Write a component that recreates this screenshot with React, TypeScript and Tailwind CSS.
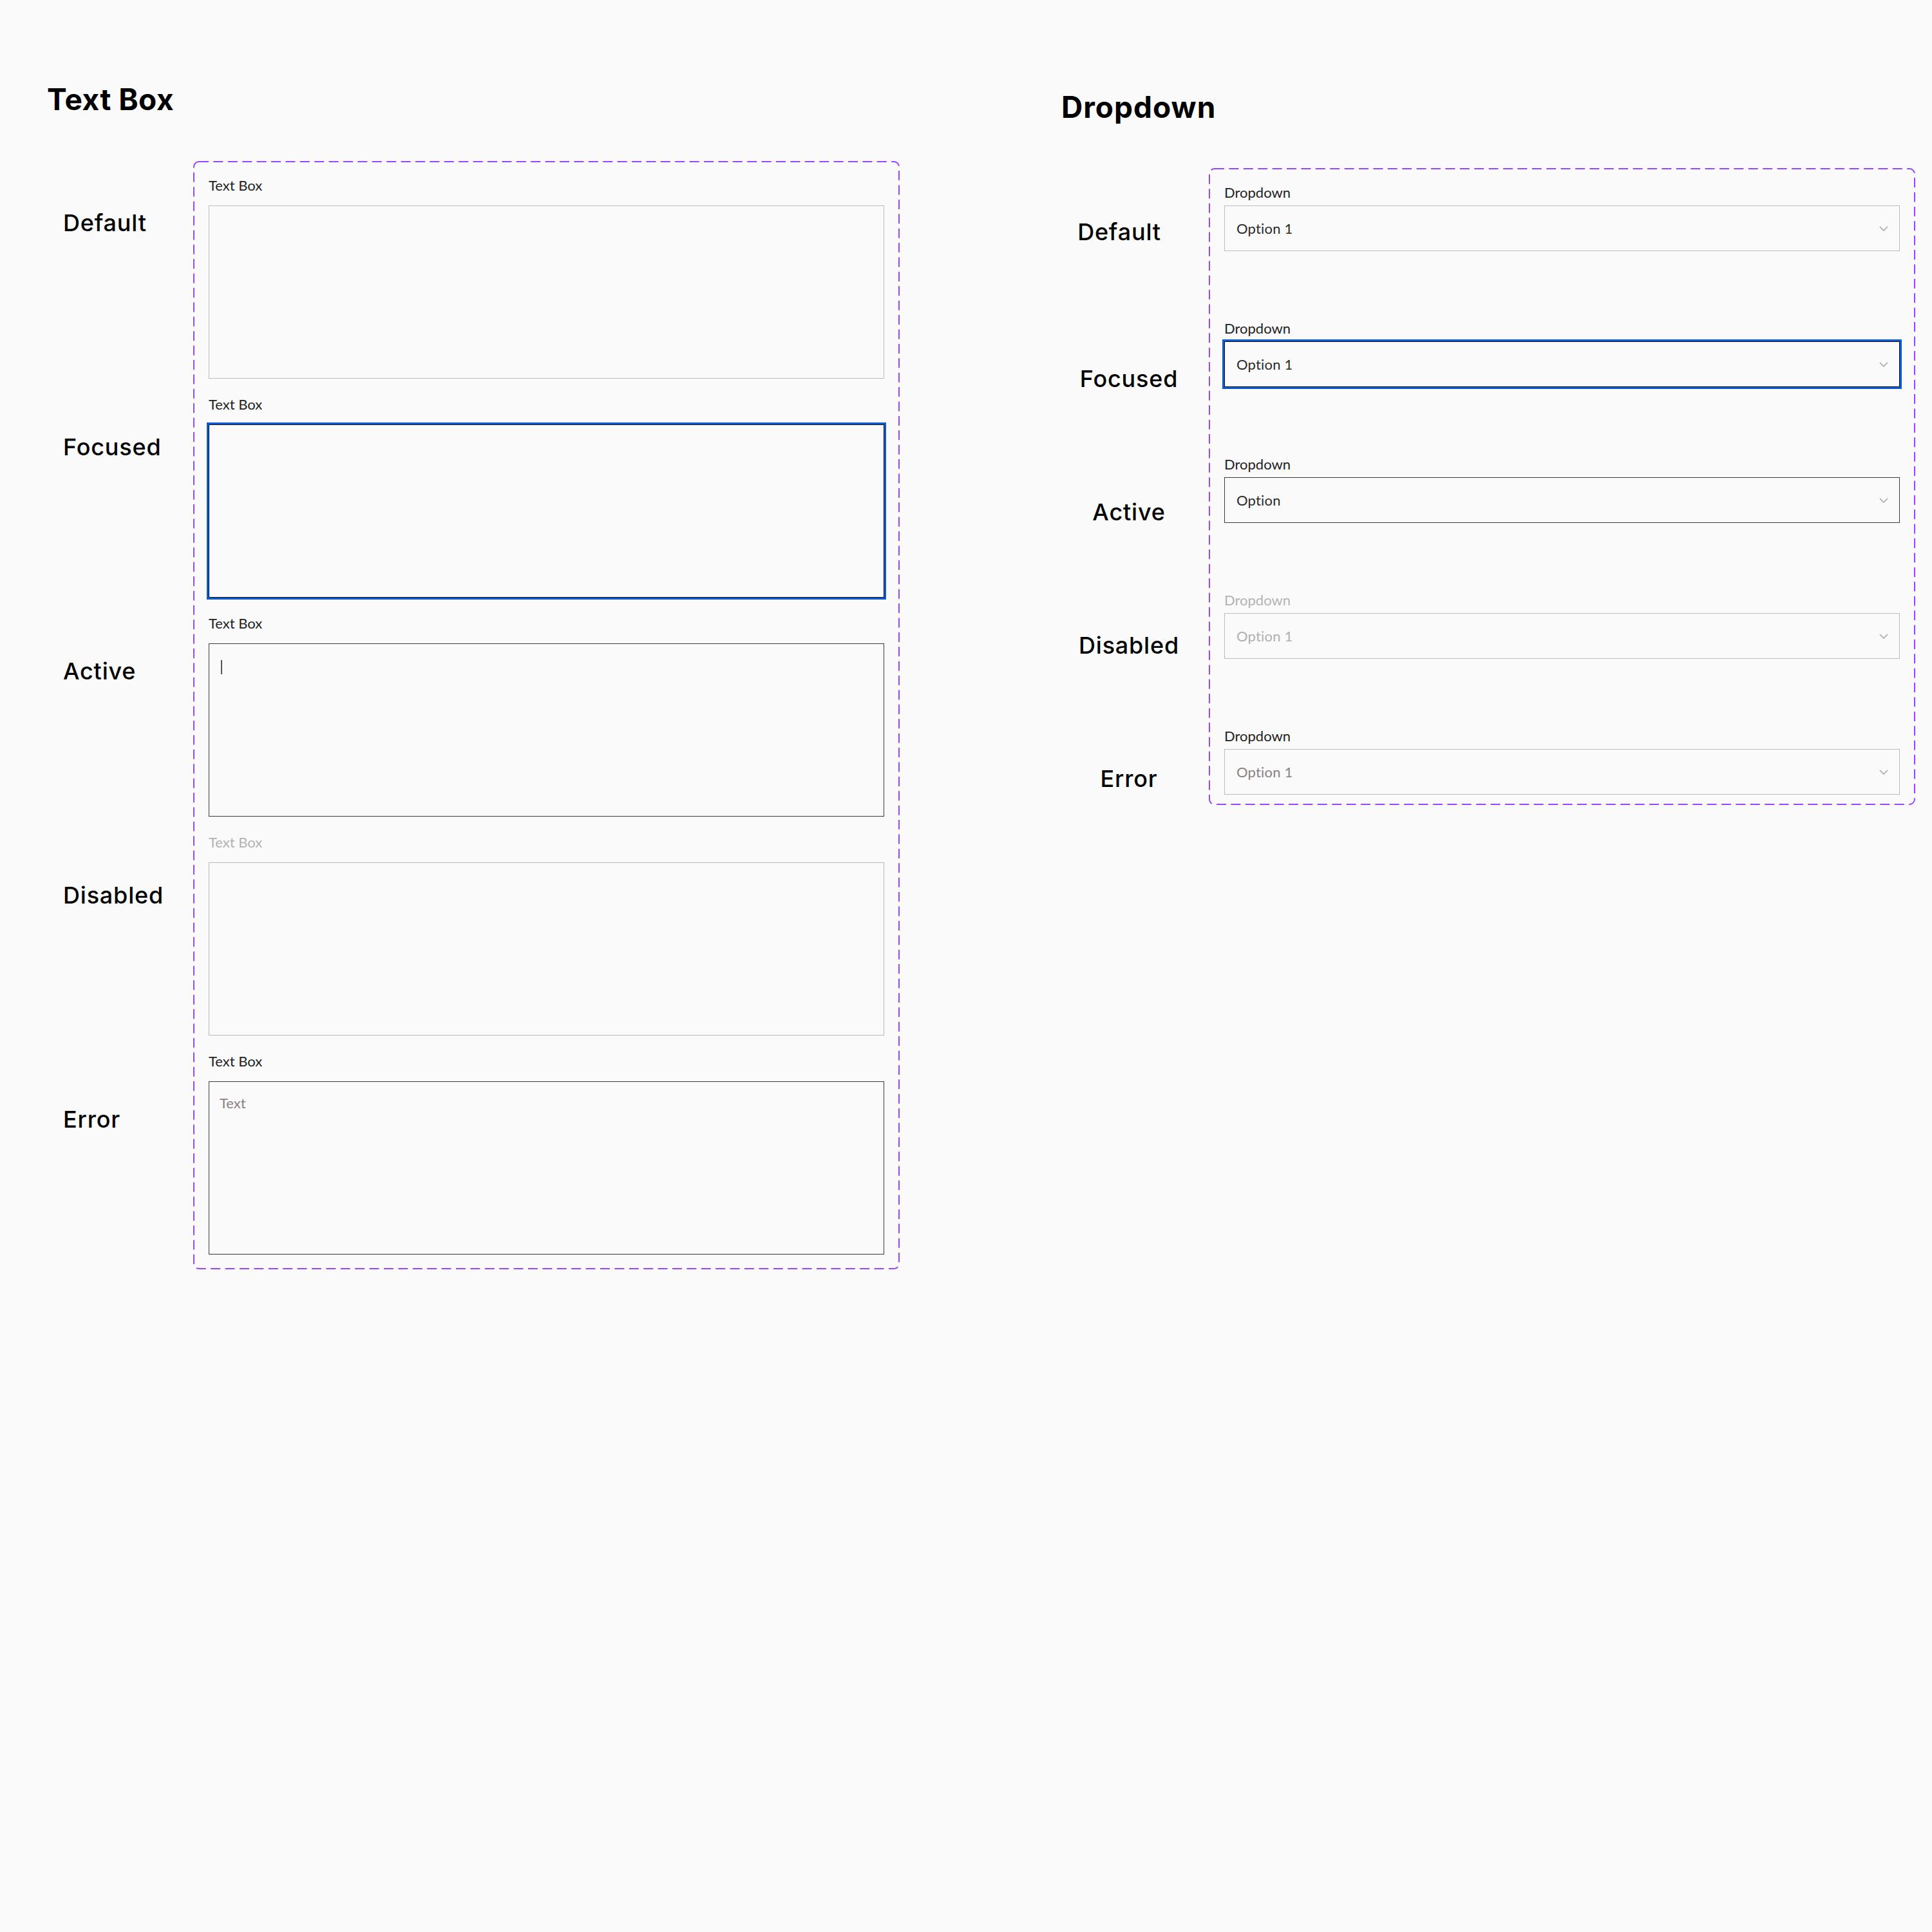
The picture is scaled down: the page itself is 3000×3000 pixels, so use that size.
import React from "react";

const labelFont = { fontFamily: "Lato, 'Open Sans', sans-serif" } as const;

function DashedFrame() {
  return (
    <svg className="pointer-events-none absolute inset-0 h-full w-full overflow-visible" aria-hidden>
      <rect
        x="1"
        y="1"
        rx="8"
        ry="8"
        className="h-[calc(100%-2px)] w-[calc(100%-2px)]"
        fill="none"
        stroke="#9747ff"
        strokeWidth="2"
        strokeDasharray="15 7.4"
      />
    </svg>
  );
}

function Chevron() {
  return (
    <svg width="14" height="8" viewBox="0 0 14 8" className="shrink-0">
      <path d="M1 1 L7 7 L13 1" fill="none" stroke="#a3a3a3" strokeWidth="1.5" />
    </svg>
  );
}

type FieldState = "default" | "focused" | "active" | "disabled" | "error";

function TextBoxField({ state }: { state: FieldState }) {
  const labelColor = state === "disabled" ? "text-[#b3b3b3]" : "text-[#222222]";
  let box = "border-[1.5px] border-[#bdbdbd]";
  if (state === "focused") box = "border-[1.5px] border-[#111111] shadow-[0_0_0_3px_#0b5cd6]";
  if (state === "active") box = "border-[1.5px] border-[#3a3a3a]";
  if (state === "disabled") box = "border-[1.5px] border-[#b8b8b8]";
  if (state === "error") box = "border-[1.5px] border-[#3a3a3a]";
  return (
    <div className="flex flex-col">
      <div className={`h-[26px] text-[22px] leading-[26px] ${labelColor}`} style={labelFont}>
        Text Box
      </div>
      <div className={`mt-[18px] h-[269px] w-full bg-[#fafafa] pl-[16px] pt-[20px] ${box}`}>
        {state === "active" && <div className="ml-[2px] mt-[5px] h-[22px] w-[1.5px] bg-[#555555]" />}
        {state === "error" && (
          <div className="text-[22px] leading-[26px] text-[#8a8282]" style={labelFont}>
            Text
          </div>
        )}
      </div>
    </div>
  );
}

function DropdownField({ state, value }: { state: FieldState; value: string }) {
  const labelColor = state === "disabled" ? "text-[#b3b3b3]" : "text-[#222222]";
  let box = "border-[1.5px] border-[#bdbdbd]";
  if (state === "focused") box = "border-[1.5px] border-[#111111] shadow-[0_0_0_3px_#0b5cd6]";
  if (state === "active") box = "border-[1.5px] border-[#3a3a3a]";
  if (state === "disabled") box = "border-[1.5px] border-[#bcbcbc]";
  let valueColor = "text-[#2b2b2b]";
  if (state === "disabled") valueColor = "text-[#b0b0b0]";
  if (state === "error") valueColor = "text-[#8a8282]";
  return (
    <div className="flex flex-col">
      <div className={`h-[26px] text-[22px] leading-[26px] ${labelColor}`} style={labelFont}>
        Dropdown
      </div>
      <div className={`mt-[7px] flex h-[71px] w-full items-center justify-between bg-[#fafafa] pl-[18px] pr-[17px] ${box}`}>
        <span className={`text-[22px] leading-[26px] tracking-[0.2px] ${valueColor}`} style={labelFont}>
          {value}
        </span>
        <Chevron />
      </div>
    </div>
  );
}

const titleFont = { fontFamily: "Inter, 'Liberation Sans', sans-serif" } as const;

export default function App() {
  return (
    <div className="flex h-[3000px] w-[3000px] items-start gap-[251px] bg-[#fafafa] pl-[73px] pt-[126px]">
      {/* Text Box column */}
      <section className="flex flex-col">
        <h2 className="h-[56px] text-[46px] font-bold leading-[56px] tracking-[0.5px] text-black" style={titleFont}>
          Text Box
        </h2>
        <div className="mt-[68px] flex">
          <div className="flex w-[227px] flex-col gap-[304px] pl-[25px] pt-[74px]">
            {["Default", "Focused", "Active", "Disabled", "Error"].map((t) => (
              <div key={t} className="h-[44px] text-[36px] font-medium leading-[44px] tracking-[0.8px] text-black" style={titleFont}>
                {t}
              </div>
            ))}
          </div>
          <div className="relative flex w-[1097px] flex-col gap-[27px] px-[24px] pb-[23px] pt-[25px]">
            <DashedFrame />
            <TextBoxField state="default" />
            <TextBoxField state="focused" />
            <TextBoxField state="active" />
            <TextBoxField state="disabled" />
            <TextBoxField state="error" />
          </div>
        </div>
      </section>

      {/* Dropdown column */}
      <section className="mt-[12px] flex flex-col">
        <h2 className="h-[56px] text-[46px] font-bold leading-[56px] tracking-[1px] text-black" style={titleFont}>
          Dropdown
        </h2>
        <div className="mt-[67px] flex">
          <div className="flex w-[210px] flex-col items-center gap-[163px] pt-[77px]">
            <div className="mr-[30px] h-[44px] text-[36px] font-medium leading-[44px] tracking-[0.8px] text-black" style={titleFont}>
              Default
            </div>
            <div className="mt-[21px] h-[44px] text-[36px] font-medium leading-[44px] tracking-[0.8px] text-black" style={titleFont}>
              Focused
            </div>
            <div className="h-[44px] text-[36px] font-medium leading-[44px] tracking-[0.8px] text-black" style={titleFont}>
              Active
            </div>
            <div className="h-[44px] text-[36px] font-medium leading-[44px] tracking-[0.8px] text-black" style={titleFont}>
              Disabled
            </div>
            <div className="h-[44px] text-[36px] font-medium leading-[44px] tracking-[0.8px] text-black" style={titleFont}>
              Error
            </div>
          </div>
          <div className="relative ml-[19px] flex w-[1097px] flex-col gap-[107px] px-[24px] pb-[16px] pt-[25px]">
            <DashedFrame />
            <DropdownField state="default" value="Option 1" />
            <DropdownField state="focused" value="Option 1" />
            <DropdownField state="active" value="Option" />
            <DropdownField state="disabled" value="Option 1" />
            <DropdownField state="error" value="Option 1" />
          </div>
        </div>
      </section>
    </div>
  );
}
